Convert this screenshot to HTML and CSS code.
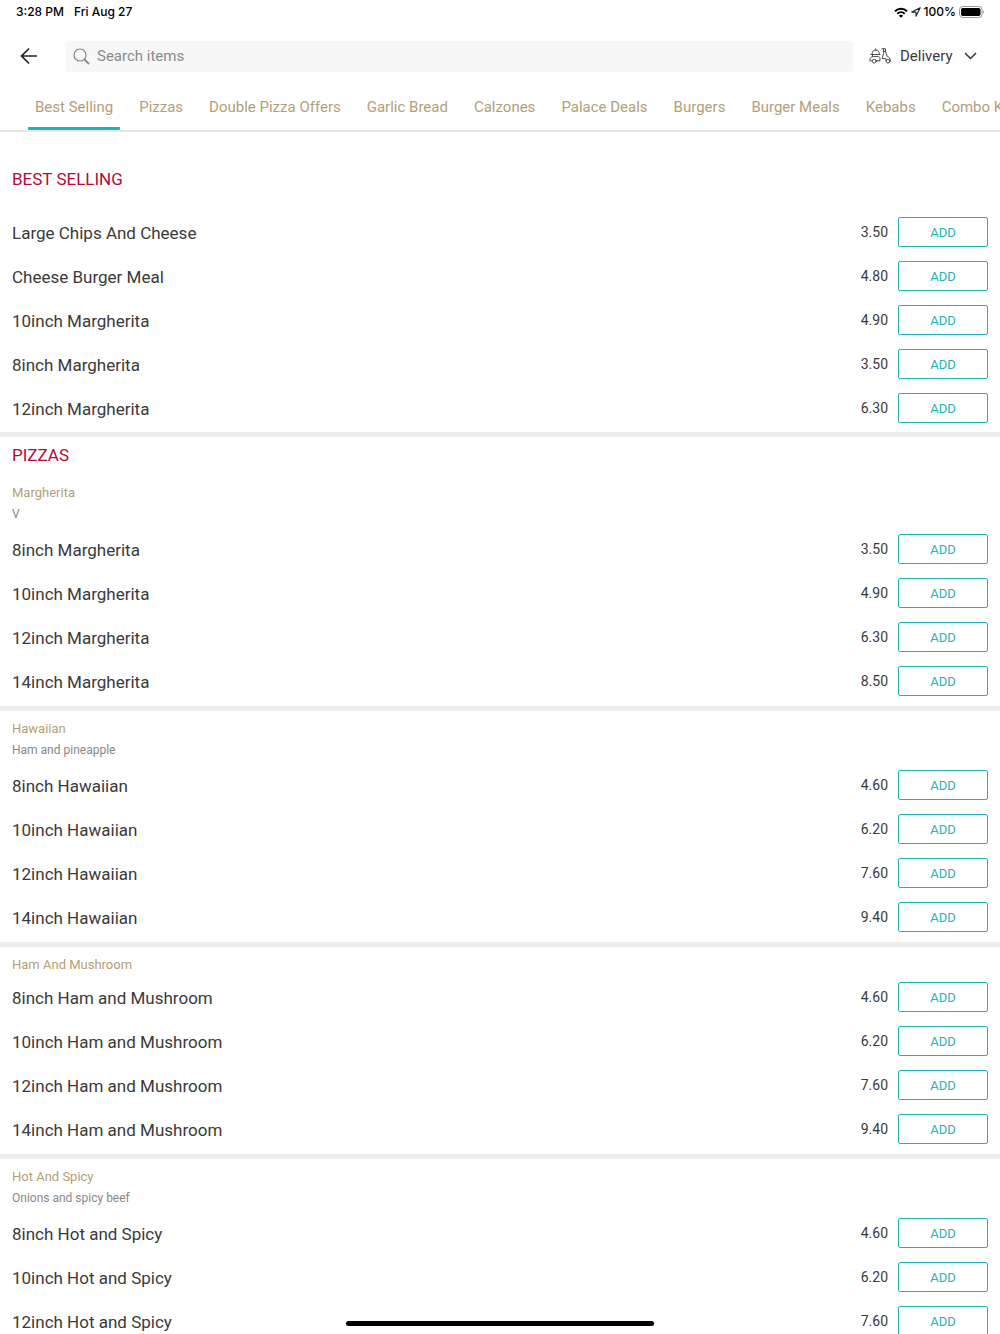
FILE: index.html
```
<!DOCTYPE html>
<html lang="en">
<head>
<meta charset="utf-8">
<meta name="viewport" content="width=device-width, initial-scale=1">
<title>Menu</title>
<link rel="stylesheet" href="styles.css">
</head>
<body>
<div class="app">
  <div class="status">
    <div class="status-left"><span>3:28 PM</span><span>Fri Aug 27</span></div>
    <div class="status-right">
      <svg width="14" height="11" viewBox="0 0 14 11" aria-hidden="true"><g fill="none" stroke="#000" stroke-width="2"><path d="M1 4.2a8.6 8.6 0 0 1 12 0"/><path d="M3.3 6.7a5.3 5.3 0 0 1 7.4 0"/></g><path d="M7 10.8 4.9 8.7a3 3 0 0 1 4.2 0z"/></svg>
      <svg width="10" height="10" viewBox="0 0 10 10" aria-hidden="true"><path d="M.8 5.1 9.2.8 5 9.2V5.1z" fill="none" stroke="#222" stroke-width="1.1" stroke-linejoin="round"/></svg>
      <span>100%</span>
      <svg width="26" height="12" viewBox="0 0 26 12" aria-hidden="true"><rect x=".5" y=".5" width="22.5" height="11" rx="3.2" fill="none" stroke="#999"/><rect x="2" y="2" width="19.500" height="8" rx="1.800"/><path d="M24.300 4.200c1.200.6 1.200 3 0 3.600z" fill="#888"/></svg>
    </div>
  </div>

  <header class="toolbar">
    <button class="back" type="button" aria-label="Back">
      <svg width="18" height="18" viewBox="0 0 18 18" aria-hidden="true"><path d="M17 9H1.500M9 1.500 1.500 9 9 16.500" fill="none" stroke="#222" stroke-width="1.700"/></svg>
    </button>
    <label class="search">
      <svg width="17" height="17" viewBox="0 0 17 17" aria-hidden="true"><circle cx="7" cy="7" r="6" fill="none" stroke="#888" stroke-width="1.200"/><path d="m11.500 11.500 4.500 4.500" stroke="#888" stroke-width="1.800"/></svg>
      <input type="search" placeholder="Search items" aria-label="Search items">
    </label>
    <label class="mode">
      <svg class="scooter" width="22" height="16" viewBox="0 0 22 16" aria-hidden="true"><g fill="none" stroke="#444" stroke-width=".95" stroke-linejoin="round" stroke-linecap="round"><path d="M3 6.300c0-2.800 1.300-4.300 3.700-4.300s3.700 1.500 3.700 4.300M6.700 2V.8M1.800 6.500h9.200"/><path d="M3.400 12.800H.8c0-2.800 1.300-4.200 3.600-4.200h5c1 0 1.600 1 1.600 2v2.200H7.200M3.500 6.500v2.100"/><circle cx="5.300" cy="13.200" r="1.900"/><path d="M13 .8h3.500v2.700h-1.700M14.600.8v4.500l-1.500 5.200h3.600l.5 2.300M16.500 3.500l1.700 5c2 .5 3.100 1.900 3.200 4.300h-.8"/><circle cx="18.900" cy="13.200" r="1.900"/></g></svg>
      <select aria-label="Order type"><option>Delivery</option><option>Collection</option></select>
      <svg class="chevron" width="13" height="8" viewBox="0 0 13 8" aria-hidden="true"><path d="m1 1 5.500 5.500L12 1" fill="none" stroke="#333" stroke-width="1.500"/></svg>
    </label>
  </header>

  <nav class="tabs">
    <a class="tab active" href="#best-selling">Best Selling</a>
    <a class="tab" href="#pizzas">Pizzas</a>
    <a class="tab" href="#double">Double Pizza Offers</a>
    <a class="tab" href="#garlic">Garlic Bread</a>
    <a class="tab" href="#calzones">Calzones</a>
    <a class="tab" href="#palace">Palace Deals</a>
    <a class="tab" href="#burgers">Burgers</a>
    <a class="tab" href="#burger-meals">Burger Meals</a>
    <a class="tab" href="#kebabs">Kebabs</a>
    <a class="tab" href="#combo">Combo Kebabs</a>
  </nav>

  <main class="menu">
    <section class="group first" id="best-selling">
      <h2>BEST SELLING</h2>
      <ul>
        <li><span class="name">Large Chips And Cheese</span><span class="price">3.50</span><button type="button">ADD</button></li>
        <li><span class="name">Cheese Burger Meal</span><span class="price">4.80</span><button type="button">ADD</button></li>
        <li><span class="name">10inch Margherita</span><span class="price">4.90</span><button type="button">ADD</button></li>
        <li><span class="name">8inch Margherita</span><span class="price">3.50</span><button type="button">ADD</button></li>
        <li><span class="name">12inch Margherita</span><span class="price">6.30</span><button type="button">ADD</button></li>
      </ul>
    </section>
    <section class="group" id="pizzas">
      <h2>PIZZAS</h2>
      <h3>Margherita</h3>
      <p>V</p>
      <ul>
        <li><span class="name">8inch Margherita</span><span class="price">3.50</span><button type="button">ADD</button></li>
        <li><span class="name">10inch Margherita</span><span class="price">4.90</span><button type="button">ADD</button></li>
        <li><span class="name">12inch Margherita</span><span class="price">6.30</span><button type="button">ADD</button></li>
        <li><span class="name">14inch Margherita</span><span class="price">8.50</span><button type="button">ADD</button></li>
      </ul>
    </section>
    <section class="group">
      <h3>Hawaiian</h3>
      <p>Ham and pineapple</p>
      <ul>
        <li><span class="name">8inch Hawaiian</span><span class="price">4.60</span><button type="button">ADD</button></li>
        <li><span class="name">10inch Hawaiian</span><span class="price">6.20</span><button type="button">ADD</button></li>
        <li><span class="name">12inch Hawaiian</span><span class="price">7.60</span><button type="button">ADD</button></li>
        <li><span class="name">14inch Hawaiian</span><span class="price">9.40</span><button type="button">ADD</button></li>
      </ul>
    </section>
    <section class="group">
      <h3>Ham And Mushroom</h3>
      <ul>
        <li><span class="name">8inch Ham and Mushroom</span><span class="price">4.60</span><button type="button">ADD</button></li>
        <li><span class="name">10inch Ham and Mushroom</span><span class="price">6.20</span><button type="button">ADD</button></li>
        <li><span class="name">12inch Ham and Mushroom</span><span class="price">7.60</span><button type="button">ADD</button></li>
        <li><span class="name">14inch Ham and Mushroom</span><span class="price">9.40</span><button type="button">ADD</button></li>
      </ul>
    </section>
    <section class="group">
      <h3>Hot And Spicy</h3>
      <p>Onions and spicy beef</p>
      <ul>
        <li><span class="name">8inch Hot and Spicy</span><span class="price">4.60</span><button type="button">ADD</button></li>
        <li><span class="name">10inch Hot and Spicy</span><span class="price">6.20</span><button type="button">ADD</button></li>
        <li><span class="name">12inch Hot and Spicy</span><span class="price">7.60</span><button type="button">ADD</button></li>
      </ul>
    </section>
  </main>
  <div class="home-indicator"></div>
</div>
</body>
</html>
```
FILE: styles.css
```
* { box-sizing: border-box; }

body {
  margin: 0;
  background: #fff;
  color: #3a3a3a;
  font-family: Roboto, "Liberation Sans", sans-serif;
}

button, input, select { font: inherit; color: inherit; }

.app {
  display: flex;
  flex-direction: column;
  height: 100vh;
  overflow: hidden;
}

/* Status bar */
.status {
  flex: none;
  display: flex;
  justify-content: space-between;
  align-items: center;
  height: 24px;
  padding: 0 15px 0 16px;
  color: #000;
  font: 500 12px/24px Inter, sans-serif;
}
.status-left { display: flex; gap: 10px; }
.status-right { display: flex; align-items: center; gap: 3px; }

/* Toolbar */
.toolbar {
  flex: none;
  display: flex;
  align-items: center;
  height: 64px;
  padding: 0 23px 0 20px;
}
.back {
  display: flex;
  margin-right: 28px;
  padding: 0;
  border: 0;
  background: none;
}
.search {
  flex: 1;
  display: flex;
  align-items: center;
  gap: 7px;
  height: 31px;
  padding: 0 7px;
  border-radius: 4px;
  background: #f7f7f7;
}
.search input {
  flex: 1;
  min-width: 0;
  padding: 0;
  border: 0;
  outline: 0;
  background: none;
  font-size: 15px;
}
.search input::placeholder { color: #8a8a8a; opacity: 1; }
.mode {
  display: flex;
  align-items: center;
  margin-left: 16px;
}
.mode select {
  appearance: none;
  width: 76px;
  margin: 0 -12px 0 9px;
  padding: 0;
  border: 0;
  background: none;
  font-size: 15px;
}
.chevron { pointer-events: none; }

/* Category tabs */
.tabs {
  flex: none;
  display: flex;
  gap: 12px;
  height: 44px;
  padding-left: 28px;
  overflow: hidden;
  border-bottom: 2px solid #e6e6e6;
}
.tab {
  flex: none;
  padding: 0 7px;
  border-bottom: 3px solid transparent;
  color: #b3a078;
  font-size: 15px;
  line-height: 39px;
  text-decoration: none;
}
.tab.active { border-color: #22b4b4; border-radius: 1px; }

/* Menu */
.menu {
  flex: 1;
  min-height: 0;
  overflow: auto;
  scrollbar-width: none;
}
.group {
  padding: 8px 12px 3px;
  border-top: 5px solid #ededed;
}
.group.first { padding: 37px 12px 2px; border-top: 0; }
h2, h3, p, ul { margin: 0; padding: 0; font-weight: 400; }
h2 {
  padding-bottom: 18px;
  color: #b80a35;
  font-size: 17px;
  line-height: 20px;
}
.first h2 { padding-bottom: 21px; }
h3 {
  color: #b3a078;
  font-size: 13px;
  line-height: 20px;
}
p {
  padding: 1px 0 3px;
  color: #888;
  font-size: 12px;
  line-height: 20px;
}
li {
  display: flex;
  align-items: center;
  height: 44px;
}
.name { flex: 1; padding-top: 2px; font-size: 17px; }
.price { margin-right: 10px; font-size: 14px; }
li button {
  width: 90px;
  height: 30px;
  padding: 0;
  border: 1px solid #22b4b4;
  border-radius: 2px;
  background: #fff;
  color: #22b4b4;
  font-size: 13px;
}

.home-indicator {
  position: fixed;
  bottom: 8px;
  left: 50%;
  width: 308px;
  height: 5px;
  margin-left: -154px;
  border-radius: 3px;
  background: #000;
}
```
